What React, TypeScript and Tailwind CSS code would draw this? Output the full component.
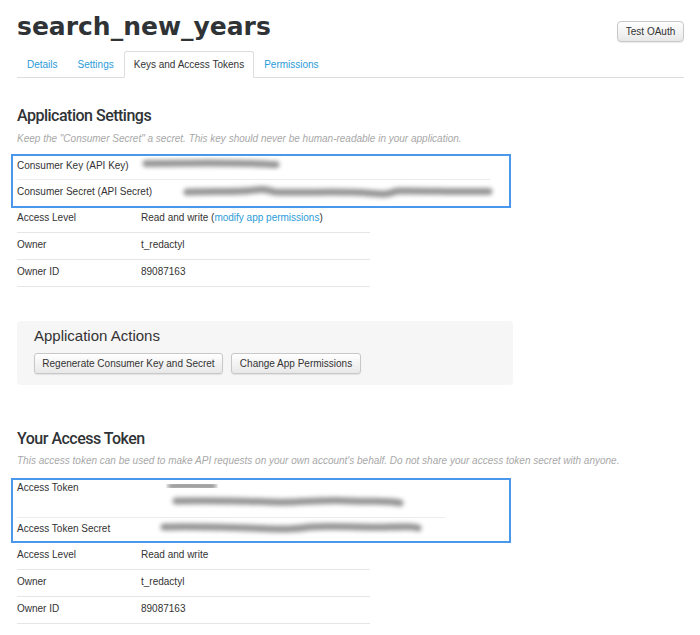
import React from 'react';

function Redacted({ width, height, d, thick = 7 }: { width: number; height: number; d: string; thick?: number }) {
  return (
    <svg width={width} height={height} viewBox={`0 0 ${width} ${height}`} className="block overflow-visible">
      <defs>
        <filter id="redact-blur" x="-10%" y="-300%" width="120%" height="700%">
          <feGaussianBlur stdDeviation="2" />
        </filter>
      </defs>
      <path d={d} stroke="#8a8a8a" strokeWidth={thick} strokeLinecap="round" fill="none" filter="url(#redact-blur)" opacity="0.9" />
    </svg>
  );
}

function Row({ label, children }: { label: string; children: React.ReactNode }) {
  return (
    <div className="flex h-[27px] w-[353px] border-b border-[#e6e6e6] pt-[6px] leading-[12px]">
      <div className="w-[124px] shrink-0">{label}</div>
      <div>{children}</div>
    </div>
  );
}

function GrayButton({ children, className = '' }: { children: React.ReactNode; className?: string }) {
  return (
    <button
      className={`h-[21px] whitespace-nowrap rounded-[3px] border border-[#c8c8c8] bg-gradient-to-b from-white to-[#e8e8e8] text-center text-[10px] leading-[19px] text-[#333] shadow-[0_1px_1px_rgba(0,0,0,0.08)] ${className}`}
    >
      {children}
    </button>
  );
}

export default function App() {
  return (
    <div className="h-[635px] w-[700px] overflow-hidden bg-white text-[10px] text-[#333]" style={{ fontFamily: '"Liberation Sans", Arial, sans-serif' }}>
      <div className="w-[684px] pl-[17px]">
        {/* header */}
        <div className="flex items-start justify-between pt-[12px]">
          <h1 className="text-[25px] font-bold leading-[30px] text-[#2f3336]" style={{ fontFamily: '"DejaVu Sans", sans-serif' }}>
            search_new_years
          </h1>
          <GrayButton className="mt-[9px] w-[67px] rounded-[4px]">Test OAuth</GrayButton>
        </div>

        {/* tabs */}
        <div className="mt-[9px] flex border-b border-[#ddd]">
          <a className="-mb-px border border-transparent px-[9px] leading-[25px] text-[#2b9bd8]">Details</a>
          <a className="-mb-px border border-transparent px-[9px] leading-[25px] text-[#2b9bd8]">Settings</a>
          <a className="-mb-px rounded-t-[3px] border border-[#ddd] border-b-white bg-white px-[9px] leading-[25px] text-[#333]">
            Keys and Access Tokens
          </a>
          <a className="-mb-px border border-transparent px-[9px] leading-[25px] text-[#2b9bd8]">Permissions</a>
        </div>

        {/* application settings */}
        <h2
          className="mt-[28px] text-[16px] font-medium leading-[20px] tracking-[-0.5px] text-[#2f3336]"
          style={{ fontFamily: 'Roboto, sans-serif' }}
        >
          Application Settings
        </h2>
        <p className="mt-[7px] italic leading-[12px] text-[#a8a8a8]">
          Keep the "Consumer Secret" a secret. This key should never be human-readable in your application.
        </p>

        <div className="-ml-[6px] mt-[9px] w-[500px] border-2 border-[#4a98ec] pl-[4px]">
          <div className="flex h-[24px] w-[473px] border-b border-[#ececec] pt-[4px] leading-[12px]">
            <div className="w-[124px] shrink-0">Consumer Key (API Key)</div>
            <div className="pl-[1px]">
              <Redacted width={138} height={8} d="M4 3.5 C 40 3, 80 2.5, 110 3.5 S 128 5, 134 4.5" />
            </div>
          </div>
          <div className="flex h-[26px] pt-[6px] leading-[12px]">
            <div className="w-[166px] shrink-0">Consumer Secret (API Secret)</div>
            <div>
              <Redacted
                width={310}
                height={10}
                d="M4 6 C 30 5, 55 6, 68 4.5 S 80 3, 92 6 C 120 7, 160 5, 185 7 S 200 8, 215 5 C 240 4.5, 270 6, 306 5.5"
              />
            </div>
          </div>
        </div>

        <div className="-mt-[2px]">
          <Row label="Access Level">
            Read and write (<span className="text-[#2b9bd8]">modify app permissions</span>)
          </Row>
          <Row label="Owner">t_redactyl</Row>
          <Row label="Owner ID">89087163</Row>
        </div>

        {/* application actions */}
        <div className="mt-[34px] h-[64px] w-[496px] rounded-[4px] bg-[#f6f6f6] pl-[17px] pt-[6px]">
          <h3 className="text-[15px] leading-[18px] text-[#333]">Application Actions</h3>
          <div className="mt-[8px] flex gap-[8px]">
            <GrayButton className="w-[189px]">Regenerate Consumer Key and Secret</GrayButton>
            <GrayButton className="w-[130px]">Change App Permissions</GrayButton>
          </div>
        </div>

        {/* access token */}
        <h2
          className="mt-[44px] text-[16px] font-medium leading-[20px] tracking-[-0.5px] text-[#2f3336]"
          style={{ fontFamily: 'Roboto, sans-serif' }}
        >
          Your Access Token
        </h2>
        <p className="mt-[6px] italic leading-[12px] text-[#a8a8a8]">
          This access token can be used to make API requests on your own account's behalf. Do not share your access token secret with anyone.
        </p>

        <div className="-ml-[6px] mt-[11px] w-[500px] border-2 border-[#4a98ec] pl-[4px]">
          <div className="flex h-[38px] w-[428px] border-b border-[#ececec] pt-[2px] leading-[12px]">
            <div className="w-[150px] shrink-0">Access Token</div>
            <div className="flex flex-col">
              <Redacted width={50} height={8} d="M4 4 C 15 3, 30 4.5, 46 4" />
              <div className="ml-[5px] mt-[6px]">
                <Redacted width={232} height={9} d="M4 5 C 40 4, 70 5, 100 6 S 150 3, 180 5 C 200 6, 215 4, 228 7" />
              </div>
            </div>
          </div>
          <div className="flex h-[23px] pt-[5px] leading-[12px]">
            <div className="w-[143px] shrink-0">Access Token Secret</div>
            <div className="-mt-[1px]">
              <Redacted width={262} height={10} d="M4 5 C 30 4, 60 5, 90 6 S 130 8, 150 5 C 170 3, 200 6, 230 5 S 250 5, 258 6" />
            </div>
          </div>
        </div>

        <div>
          <Row label="Access Level">Read and write</Row>
          <Row label="Owner">t_redactyl</Row>
          <Row label="Owner ID">89087163</Row>
        </div>
      </div>
    </div>
  );
}
